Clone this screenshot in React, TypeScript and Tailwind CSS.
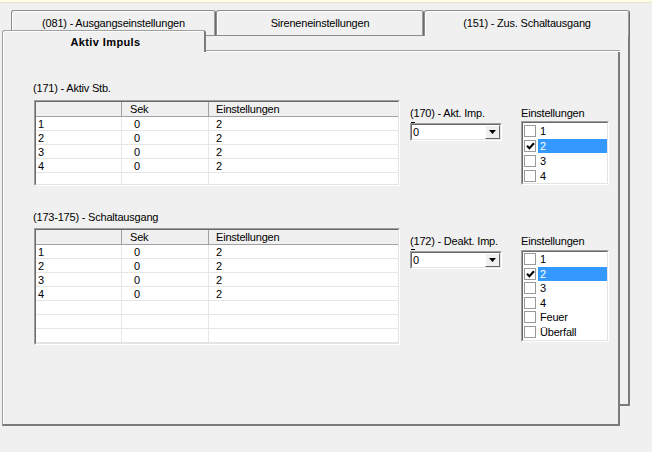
import React from "react";

type Row = [string, string, string];

const rows: Row[] = [
  ["1", "0", "2"],
  ["2", "0", "2"],
  ["3", "0", "2"],
  ["4", "0", "2"],
];

type Item = { label: string; checked?: boolean; selected?: boolean };

const shortList: Item[] = [
  { label: "1" },
  { label: "2", checked: true, selected: true },
  { label: "3" },
  { label: "4" },
];

const longList: Item[] = [...shortList, { label: "Feuer" }, { label: "Überfall" }];

function OuterTab({ label, className, selected }: { label: string; className: string; selected?: boolean }) {
  return (
    <div
      className={`flex items-center justify-center rounded-t-[3px] border border-[#8d8d8d] border-r-[#6b6b6b] bg-[#f0f0f0] shadow-[inset_1px_1px_0_#ffffff,inset_-1px_0_0_#a0a0a0] ${
        selected ? "border-b-0" : "border-b-[#8d8d8d]"
      } ${className}`}
    >
      {label}
    </div>
  );
}

function Grid({ className, bodyClass, empty }: { className: string; bodyClass: string; empty: number }) {
  const blanks = Array.from({ length: empty }, () => ["", "", ""] as Row);
  return (
    <div className={`w-[366px] border border-[#a0a0a0] border-b-white border-r-white ${className}`}>
      <div className="border border-[#696969] border-b-[#e3e3e3] border-r-[#e3e3e3] bg-white">
        <div className="flex h-[15px] border-b border-[#a0a0a0] bg-[#f0f0f0] leading-[14px]">
          <div className="w-[86px] border-r border-[#a0a0a0]" />
          <div className="w-[87px] border-r border-[#a0a0a0] pl-[8px]">Sek</div>
          <div className="flex-1 pl-[7px]">Einstellungen</div>
        </div>
        <div className={`overflow-hidden ${bodyClass}`}>
          {[...rows, ...blanks].map((r, i) => (
            <div key={i} className="flex h-[14px] border-b border-[#e6e6e6] leading-[14px]">
              <div className="w-[86px] border-r border-[#e6e6e6] pl-[2px]">{r[0]}</div>
              <div className="w-[87px] border-r border-[#e6e6e6] pl-[12px]">{r[1]}</div>
              <div className="flex-1 pl-[7px]">{r[2]}</div>
            </div>
          ))}
        </div>
      </div>
    </div>
  );
}

function Combo({ className }: { className: string }) {
  return (
    <div className={`h-[18px] w-[92px] border border-[#a0a0a0] border-b-white border-r-white ${className}`}>
      <div className="flex h-full items-center border border-[#696969] border-b-[#e3e3e3] border-r-[#e3e3e3] bg-white">
        <span className="flex-1 pl-[1px] leading-[14px]">0</span>
        <div className="flex h-full w-[15px] items-center justify-center border border-white border-b-[#696969] border-r-[#696969] bg-[#f0f0f0]">
          <svg width="7" height="4" viewBox="0 0 7 4">
            <path d="M0 0h7L3.5 4z" fill="#000" />
          </svg>
        </div>
      </div>
    </div>
  );
}

function CheckList({ items, className, rowClass }: { items: Item[]; className: string; rowClass: string }) {
  return (
    <div className={`w-[88px] border border-[#a0a0a0] border-b-white border-r-white ${className}`}>
      <div className="h-full overflow-hidden border border-[#696969] border-b-[#e3e3e3] border-r-[#e3e3e3] bg-white">
        {items.map((it) => (
          <div key={it.label} className={`flex items-center ${rowClass}`}>
            <span className="ml-[1px] flex h-[12px] w-[12px] items-center justify-center border border-[#9a9a9a] bg-white">
              {it.checked && (
                <svg width="9" height="8" viewBox="0 0 9 8">
                  <path d="M1 3.8 L3.4 6.2 L8 1.2" fill="none" stroke="#000" strokeWidth="2" />
                </svg>
              )}
            </span>
            <span
              className={`ml-[2px] h-[14px] flex-1 pl-[2px] leading-[14px] ${
                it.selected ? "bg-[#3399ff] text-white" : ""
              }`}
            >
              {it.label}
            </span>
          </div>
        ))}
      </div>
    </div>
  );
}

export default function App() {
  return (
    <div className="grid h-[452px] w-[652px] overflow-hidden bg-[#f0f0f0] font-['Liberation_Sans',Arial,sans-serif] text-[11px] leading-[13px] tracking-[-0.2px] text-black">
      <div className="col-start-1 row-start-1 h-[3px] self-start border-b border-[#e4e4c6] bg-[#fdfde6]" />

      {/* outer tab control */}
      <div className="col-start-1 row-start-1 ml-[11px] mt-[10px] w-[619px] self-start">
        <div className="flex h-[26px]">
          <OuterTab className="w-[205px]" label="(081) - Ausgangseinstellungen" />
          <OuterTab className="w-[208px]" label="Sireneneinstellungen" />
          <OuterTab className="w-[206px]" label="(151) - Zus. Schaltausgang" selected />
        </div>
        <div className="h-[370px] border-b-2 border-r-2 border-[#7b7b7b]" />
      </div>

      {/* inner tab control */}
      <div className="col-start-1 row-start-1 ml-[2px] mt-[30px] w-[618px] self-start">
        <div className="flex h-[22px]">
          <div className="flex w-[204px] items-center justify-center rounded-t-[3px] border-l border-t border-r-2 border-[#a0a0a0] border-r-[#7b7b7b] bg-[#f0f0f0] pl-[4px] pt-[2px] font-bold tracking-[0.4px] shadow-[inset_1px_1px_0_#ffffff]">
            Aktiv Impuls
          </div>
          <div className="flex flex-1 flex-col justify-end">
            <div className="h-px bg-[#a0a0a0]" />
            <div className="h-px bg-white" />
          </div>
        </div>
        <div className="h-[374px] border-b-2 border-l border-r-2 border-[#7b7b7b] border-l-[#a0a0a0] bg-[#f0f0f0] pl-[31px] pt-[30px] shadow-[inset_1px_0_0_#ffffff]">
          {/* section 1 */}
          <div className="flex items-start">
            <div className="w-[366px]">
              <div className="-ml-px h-[13px]">(171) - Aktiv Stb.</div>
              <Grid className="mt-[5px]" bodyClass="h-[67px]" empty={1} />
            </div>
            <div className="ml-[10px] mt-[25px] w-[92px]">
              <div className="h-[13px]">(170) - Akt. Imp.</div>
              <div className="ml-px mt-[2px] h-px w-[4px] bg-black" />
              <Combo className="" />
            </div>
            <div className="ml-[19px] mt-[25px] w-[88px]">
              <div className="h-[13px]">Einstellungen</div>
              <CheckList className="mt-px h-[64px]" rowClass="h-[15px]" items={shortList} />
            </div>
          </div>

          {/* section 2 */}
          <div className="mt-[25px] flex items-start">
            <div className="w-[366px]">
              <div className="-ml-px h-[13px]">(173-175) - Schaltausgang</div>
              <Grid className="mt-[4px]" bodyClass="h-[98px]" empty={3} />
            </div>
            <div className="ml-[10px] mt-[24px] w-[92px]">
              <div className="h-[13px]">(172) - Deakt. Imp.</div>
              <div className="ml-px mt-px h-px w-[4px] bg-black" />
              <Combo className="mt-px" />
            </div>
            <div className="ml-[19px] mt-[24px] w-[88px]">
              <div className="h-[13px]">Einstellungen</div>
              <CheckList className="mt-[2px] h-[92px]" rowClass="h-[14.5px]" items={longList} />
            </div>
          </div>
        </div>
      </div>
    </div>
  );
}
